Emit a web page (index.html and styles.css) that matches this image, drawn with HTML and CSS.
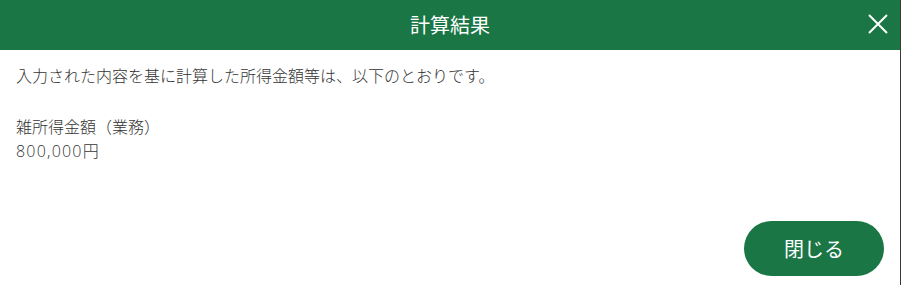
FILE: index.html
```html
<!DOCTYPE html>
<html lang="ja">
<head>
<meta charset="utf-8">
<title>計算結果</title>
<link rel="stylesheet" href="styles.css">
</head>
<body>
<div class="dialog">
  <header class="dialog-header">
    <h1 class="dialog-title">計算結果</h1>
    <button class="close-btn" aria-label="閉じる">
      <svg width="20" height="20" viewBox="0 0 20 20"><path d="M1 1 L19 19 M19 1 L1 19" stroke="#fff" stroke-width="2" fill="none"/></svg>
    </button>
  </header>
  <main class="dialog-body">
    <p class="intro">入力された内容を基に計算した所得金額等は、以下のとおりです。</p>
    <div class="result">
      <div class="result-label">雑所得金額（業務）</div>
      <div class="result-value"><span class="num">800,000</span>円</div>
    </div>
  </main>
  <footer class="dialog-footer">
    <button class="primary-btn">閉じる</button>
  </footer>
</div>
</body>
</html>
```
FILE: styles.css
```css
html, body {
  margin: 0;
  padding: 0;
  height: 100%;
  background: #3a3a3a;
}
body {
  font-family: "Noto Sans CJK JP", "Noto Sans", sans-serif;
}
.dialog {
  width: 900px;
  height: 285px;
  background: #fff;
  display: flex;
  flex-direction: column;
}
.dialog-header {
  height: 50px;
  background: #1a7645;
  display: flex;
  align-items: center;
  justify-content: center;
  position: relative;
}
.dialog-title {
  margin: 0;
  color: #fff;
  font-size: 20px;
  font-weight: 400;
  line-height: 1;
}
.close-btn {
  position: absolute;
  right: 12px;
  top: 14px;
  width: 20px;
  height: 20px;
  padding: 0;
  border: 0;
  background: none;
  display: flex;
}
.dialog-body {
  flex: 1;
  padding: 13px 16px 0;
  color: #333;
  font-size: 16px;
  font-weight: 300;
  line-height: 24px;
}
.intro {
  margin: 0 0 27px;
}
.num {
  font-family: "Open Sans", "Noto Sans", sans-serif;
  font-weight: 300;
  letter-spacing: 1.2px;
}
.dialog-footer {
  display: flex;
  justify-content: flex-end;
  padding: 0 16px 9px;
}
.primary-btn {
  width: 140px;
  height: 55px;
  border: 0;
  border-radius: 28px;
  background: #1a7645;
  color: #fff;
  font-family: inherit;
  font-size: 20px;
  font-weight: 400;
  padding: 0;
}
```
